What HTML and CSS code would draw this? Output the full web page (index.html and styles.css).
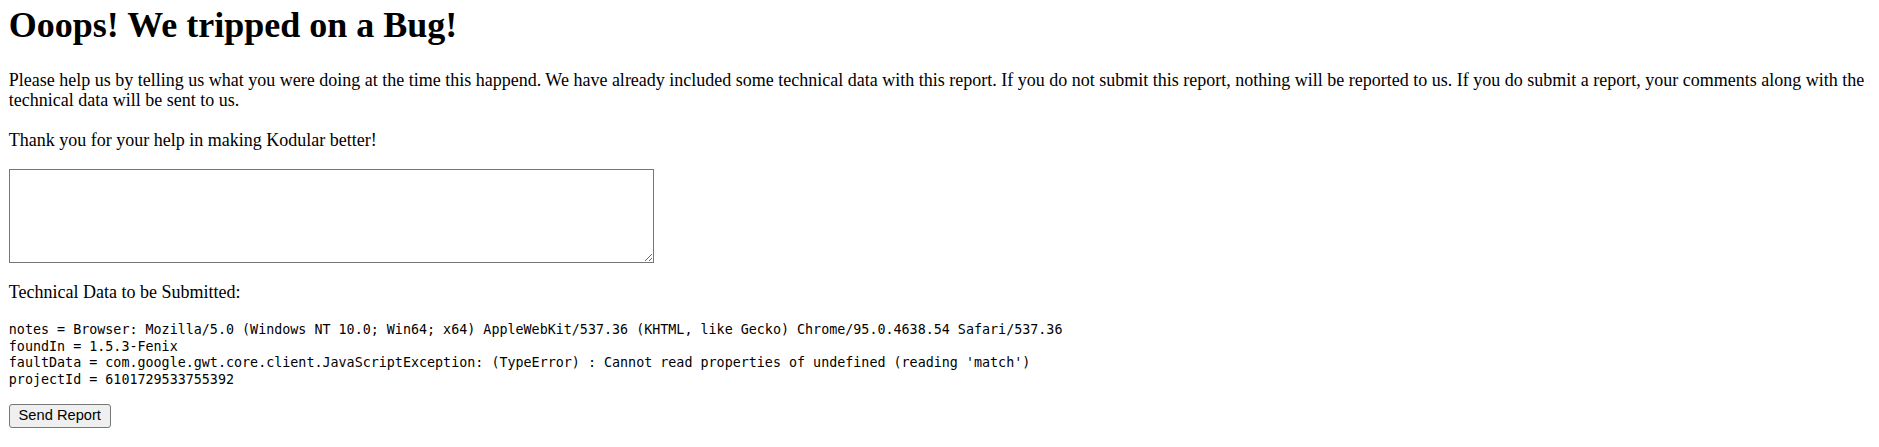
FILE: index.html
```html
<!DOCTYPE html>
<html lang="en">
<head>
<meta charset="utf-8">
<title>Bug Report</title>
<link rel="stylesheet" href="styles.css">
</head>
<body>
<div class="page">
  <h1 class="title">Ooops! We tripped on a Bug!</h1>
  <p class="text">Please help us by telling us what you were doing at the time this happend. We have already included some technical data with this report. If you do not submit this report, nothing will be reported to us. If you do submit a report, your comments along with the technical data will be sent to us.</p>
  <p class="text thanks">Thank you for your help in making Kodular better!</p>
  <textarea class="comments"></textarea>
  <p class="text tech-label">Technical Data to be Submitted:</p>
  <pre class="tech-data">notes = Browser: Mozilla/5.0 (Windows NT 10.0; Win64; x64) AppleWebKit/537.36 (KHTML, like Gecko) Chrome/95.0.4638.54 Safari/537.36
foundIn = 1.5.3-Fenix
faultData = com.google.gwt.core.client.JavaScriptException: (TypeError) : Cannot read properties of undefined (reading 'match')
projectId = 6101729533755392</pre>
  <button class="send" type="button">Send Report</button>
</div>
</body>
</html>
```

FILE: styles.css
```css
html, body {
  margin: 0;
  padding: 0;
  background: #ffffff;
}

body {
  font-family: "Liberation Serif", "Times New Roman", serif;
  color: #000000;
}

.page {
  padding: 4.6px 8.8px 0 8.8px;
}

.title {
  margin: 0 0 25.4px 0;
  font-size: 36px;
  line-height: 40px;
  font-weight: bold;
}

.text {
  margin: 0 0 20px 0;
  font-size: 18px;
  line-height: 20px;
}

.thanks {
  margin-bottom: 19px;
}

.comments {
  display: block;
  box-sizing: border-box;
  width: 645px;
  height: 94px;
  margin: 0 0 19px 0;
  border: 1px solid #767676;
  padding: 2px;
  background: #ffffff;
  font-family: "DejaVu Sans Mono", monospace;
  font-size: 14.6px;
}

.tech-label {
  margin-bottom: 20px;
}

.tech-data {
  margin: 0 0 15.5px 0;
  font-family: "DejaVu Sans Mono", "Liberation Mono", monospace;
  font-size: 13.36px;
  line-height: 16.7px;
  color: #000000;
}

.send {
  display: block;
  box-sizing: border-box;
  padding: 2.2px 8.8px;
  border: 1px solid #767676;
  border-radius: 3px;
  background: #efefef;
  color: #000000;
  font-family: "Liberation Sans", Arial, sans-serif;
  font-size: 14.67px;
  line-height: 16.9px;
}
```
